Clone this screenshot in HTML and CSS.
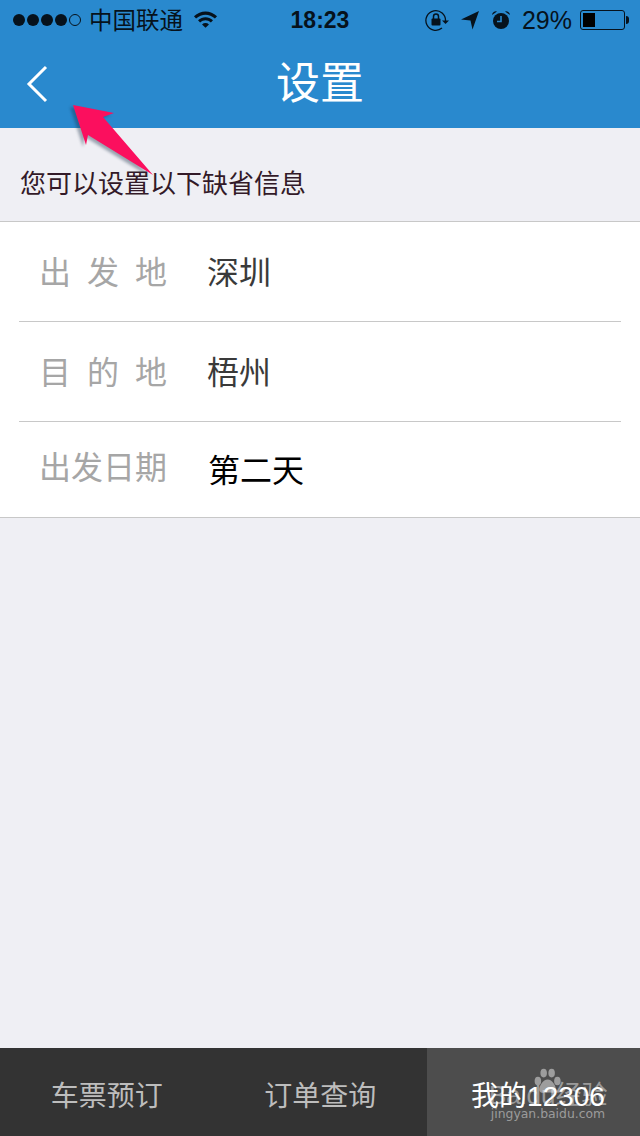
FILE: index.html
```html
<!DOCTYPE html>
<html lang="zh-CN"><head>
<meta charset="utf-8">
<meta name="viewport" content="width=device-width, initial-scale=1.0">
<link rel="stylesheet" href="styles.css">
<title>设置</title>
</head><body>
<div class="app">

<header class="top">
	<div class="status">
		<div class="status-left">
			<span class="signal"><i></i><i></i><i></i><i></i><i class="off"></i></span>
			<span class="carrier">中国联通</span>
			<svg class="wifi" width="25" height="20" viewBox="0 0 26 20">
				<path d="M1 7.2 C8 0.6 18 0.6 25 7.2 L22.8 9.5 C17 4.2 9 4.2 3.2 9.5 Z"/>
				<path d="M5.2 11.4 C10 7 16 7 20.8 11.4 L18.6 13.7 C15 10.6 11 10.6 7.4 13.7 Z"/>
				<path d="M9.4 15.6 C11.6 13.6 14.4 13.6 16.6 15.6 L13 19.2 Z"/>
			</svg>
		</div>
		<div class="clock">18:23</div>
		<div class="status-right">
			<svg class="lock" width="24" height="22" viewBox="0 0 24 22">
				<path d="M20.5 12 A9.8 9.8 0 1 0 17 19" fill="none" stroke="#06121c" stroke-width="1.3"/>
				<path d="M17 11.5 H24 L20.5 15 Z" fill="#06121c"/>
				<rect x="6.5" y="9.5" width="9" height="7" rx="1" fill="#06121c"/>
				<path d="M8.5 10 V7.5 A2.5 2.5 0 0 1 13.5 7.5 V10" fill="none" stroke="#06121c" stroke-width="1.5"/>
			</svg>
			<svg class="locate" width="20" height="20" viewBox="0 0 20 20">
				<path d="M19 1 L1 9.5 L10.5 10.5 L12.5 19.5 Z" fill="#06121c"/>
			</svg>
			<svg class="alarm" width="20" height="20" viewBox="0 0 20 20">
				<circle cx="10" cy="11" r="8" fill="#06121c"/>
				<path d="M1 5 A4 4 0 0 1 6 1.5 Z M19 5 A4 4 0 0 0 14 1.5 Z" fill="#06121c"/>
				<path d="M10 6 V11.5 H6" fill="none" stroke="#2989ce" stroke-width="1.6"/>
			</svg>
			<span class="percent">29%</span>
			<span class="battery"><span class="battery-level"></span></span>
			<span class="battery-tip"></span>
		</div>
	</div>
	<nav class="nav">
		<svg class="back" width="24" height="38" viewBox="0 0 24 38">
			<path d="M21 2 L4 19 L21 36" fill="none" stroke="#fff" stroke-width="3"/>
		</svg>
		<h1>设置</h1>
	</nav>
</header>

<main class="main">
	<p class="hint">您可以设置以下缺省信息</p>
	<ul class="list">
		<li class="row"><span class="label spaced">出发地</span><span class="value">深圳</span></li>
		<li class="row"><span class="label spaced">目的地</span><span class="value">梧州</span></li>
		<li class="row row-date"><span class="label label-date">出发日期</span><span class="value value-date">第二天</span></li>
	</ul>
</main>

<footer class="tabs">
	<div class="tab">车票预订</div>
	<div class="tab">订单查询</div>
	<div class="tab active">我的12306</div>
</footer>

<!-- annotation drawn over the screenshot -->
<svg class="arrow" width="100" height="90" viewBox="0 0 100 90">
	<path class="arrow-shadow" d="M20 3 L61 11 L50 15 L100 73 L35 33 L33 43 Z" transform="translate(-3 2)"/>
	<path d="M20 3 L61 11 L50 15 L100 73 L35 33 L33 43 Z" fill="#fb0f5e"/>
</svg>

<div class="mark">
	<svg class="paw" width="38" height="26" viewBox="10 3 34 36">
		<ellipse cx="21" cy="10" rx="4.5" ry="6"/>
		<ellipse cx="32" cy="10" rx="4.5" ry="6"/>
		<ellipse cx="13" cy="21" rx="4.5" ry="6"/>
		<ellipse cx="40" cy="21" rx="4.5" ry="6"/>
		<path d="M26.5 19 C33 19 38 28 38 33 C38 39 31 37 26.5 37 C22 37 15 39 15 33 C15 28 20 19 26.5 19 Z"/>
	</svg>
	<div class="mark-name">Baidu经验</div>
	<div class="mark-url">jingyan.baidu.com</div>
</div>

</div>
</body></html>
```

FILE: styles.css
```css
* {
	box-sizing: border-box;
}
html, body {
	margin: 0;
	padding: 0;
}
body {
	font-family: "Liberation Sans", "Noto Sans CJK SC", sans-serif;
}
.app {
	position: relative;
	display: flex;
	flex-direction: column;
	width: 640px;
	height: 1136px;
	overflow: hidden;
	background: #efeff4;
}

/* status bar + title */
.top {
	background: #2989ce;
}
.status {
	position: relative;
	display: flex;
	justify-content: space-between;
	align-items: center;
	height: 40px;
	padding: 0 11px 0 13px;
	color: #06121c;
}
.status-left, .status-right {
	display: flex;
	align-items: center;
}
.signal {
	display: flex;
	gap: 2px;
}
.signal i {
	width: 12px;
	height: 12px;
	border-radius: 50%;
	background: #06121c;
}
.signal i.off {
	background: none;
	border: 1px solid #06121c;
}
.carrier {
	margin-left: 8px;
	margin-bottom: 2px;
	font-size: 23.5px;
}
.wifi {
	margin-left: 10px;
	margin-bottom: 2px;
	fill: #06121c;
}
.clock {
	position: absolute;
	left: 0;
	right: 0;
	text-align: center;
	font-size: 23px;
	font-weight: bold;
}
.status-right svg {
	display: block;
}
.locate {
	margin-left: 11px;
}
.alarm {
	margin-left: 11px;
}
.percent {
	margin-left: 11px;
	font-size: 25px;
}
.battery {
	display: block;
	margin-left: 8px;
	width: 45px;
	height: 20px;
	padding: 2px;
	border: 1px solid #06121c;
	border-radius: 3px;
}
.battery-level {
	display: block;
	width: 12px;
	height: 100%;
	background: #000;
}
.battery-tip {
	display: block;
	width: 3px;
	height: 8px;
	margin-left: 1px;
	border-radius: 0 3px 3px 0;
	background: #06121c;
}
.nav {
	position: relative;
	height: 88px;
}
.nav h1 {
	margin: 0;
	text-align: center;
	font-size: 44px;
	font-weight: normal;
	line-height: 88px;
	color: #fff;
}
.back {
	position: absolute;
	left: 25px;
	top: 25px;
}

/* settings list */
.main {
	flex: 1;
}
.hint {
	height: 93px;
	margin: 0;
	padding: 38px 0 0 20px;
	font-size: 26px;
	line-height: 36px;
	color: #331a28;
}
.list {
	margin: 0;
	padding: 0;
	list-style: none;
	background: #fff;
	border-top: 1px solid #c8c8c8;
	border-bottom: 1px solid #c8c8c8;
}
.row {
	display: flex;
	align-items: center;
	height: 100px;
	margin-left: 19px;
	margin-right: 19px;
	padding-left: 20px;
	padding-bottom: 4px;
	border-bottom: 1px solid #c8c8c8;
	font-size: 32px;
}
.row-date {
	height: 95px;
	padding-bottom: 0;
	border-bottom: 0;
}
.label {
	width: 168px;
	font-size: 32px;
	color: #a6a6a6;
}
.label-date {
	padding-bottom: 10px;
}
.spaced {
	letter-spacing: 16px;
}
.value {
	color: #3a3a3a;
}
.value-date {
	padding: 0 0 4px 1px;
	color: #000;
}

/* bottom tabs */
.tabs {
	display: flex;
	height: 88px;
	background: #333;
}
.tab {
	width: 213.5px;
	text-align: center;
	font-size: 28px;
	line-height: 98px;
	color: #bdbdbd;
}
.tab.active {
	width: 213px;
	padding-left: 9px;
	background: #4d4d4d;
	color: #fff;
}

/* things lying over the page */
.arrow {
	position: absolute;
	left: 53px;
	top: 102px;
}
.arrow-shadow {
	fill: #1a3048;
	opacity: .4;
	filter: blur(1.5px);
}
.mark {
	position: absolute;
	left: 489px;
	top: 1068px;
	width: 118px;
	color: rgba(255, 255, 255, .45);
	text-align: center;
}
.paw {
	display: block;
	margin: 0 auto;
	fill: rgba(255, 255, 255, .45);
}
.mark-name {
	margin-top: -11px;
	font-size: 26px;
	line-height: 24px;
	white-space: nowrap;
}
.mark-url {
	font-family: "DejaVu Sans", sans-serif;
	font-size: 12.4px;
	line-height: 14px;
	white-space: nowrap;
}
```
